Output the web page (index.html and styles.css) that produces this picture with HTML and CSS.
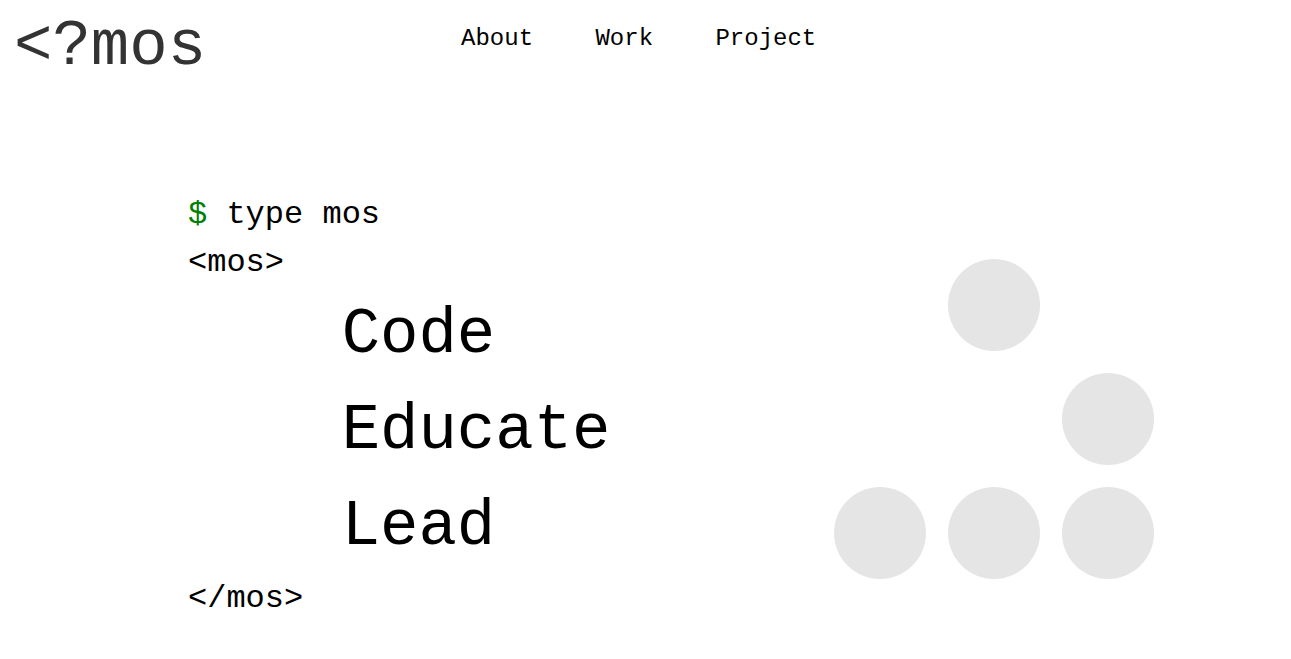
FILE: index.html
```html
<!DOCTYPE html>
<html lang="en">
<head>
<meta charset="utf-8">
<title>&lt;?mos</title>
<link rel="stylesheet" href="styles.css">
</head>
<body>
<header class="header">
  <a class="logo" href="#">&lt;?mos</a>
  <nav class="nav">
    <a href="#">About</a>
    <a href="#">Work</a>
    <a href="#">Project</a>
  </nav>
</header>
<main class="hero">
  <div class="terminal">
    <div class="line"><span class="prompt">$</span> type mos</div>
    <div class="line">&lt;mos&gt;</div>
    <div class="word">Code</div>
    <div class="word">Educate</div>
    <div class="word">Lead</div>
    <div class="line">&lt;/mos&gt;</div>
  </div>
  <div class="glider">
    <span class="cell"></span><span class="cell on"></span><span class="cell"></span>
    <span class="cell"></span><span class="cell"></span><span class="cell on"></span>
    <span class="cell on"></span><span class="cell on"></span><span class="cell on"></span>
  </div>
</main>
</body>
</html>
```
FILE: styles.css
```css
html, body {
  margin: 0;
  padding: 0;
  background: #fff;
}
body {
  font-family: "Liberation Mono", "DejaVu Sans Mono", monospace;
  color: #000;
}
a {
  text-decoration: none;
  color: inherit;
}
.header {
  display: flex;
  align-items: flex-start;
  padding-left: 14px;
}
.logo {
  display: block;
  margin-top: 15px;
  font-size: 64px;
  line-height: 1;
  color: #333;
}
.nav {
  display: flex;
  gap: 62.4px;
  margin-left: 255px;
  margin-top: 25px;
  font-size: 24px;
  line-height: 27px;
}
.nav a {
  color: #000;
}
.hero {
  display: grid;
  grid-template-columns: 646px 320px;
  align-items: start;
  padding-top: 112px;
  padding-left: 188px;
}
.terminal {
  font-size: 32px;
  line-height: 48px;
}
.prompt {
  color: #008000;
}
.word {
  font-size: 64px;
  line-height: 96px;
  padding-left: 4ch;
}
.glider {
  display: grid;
  grid-template-columns: repeat(3, 92px);
  grid-auto-rows: 92px;
  gap: 22px;
  margin-top: 68px;
}
.cell {
  border-radius: 50%;
}
.cell.on {
  background: #e5e5e5;
}
```
